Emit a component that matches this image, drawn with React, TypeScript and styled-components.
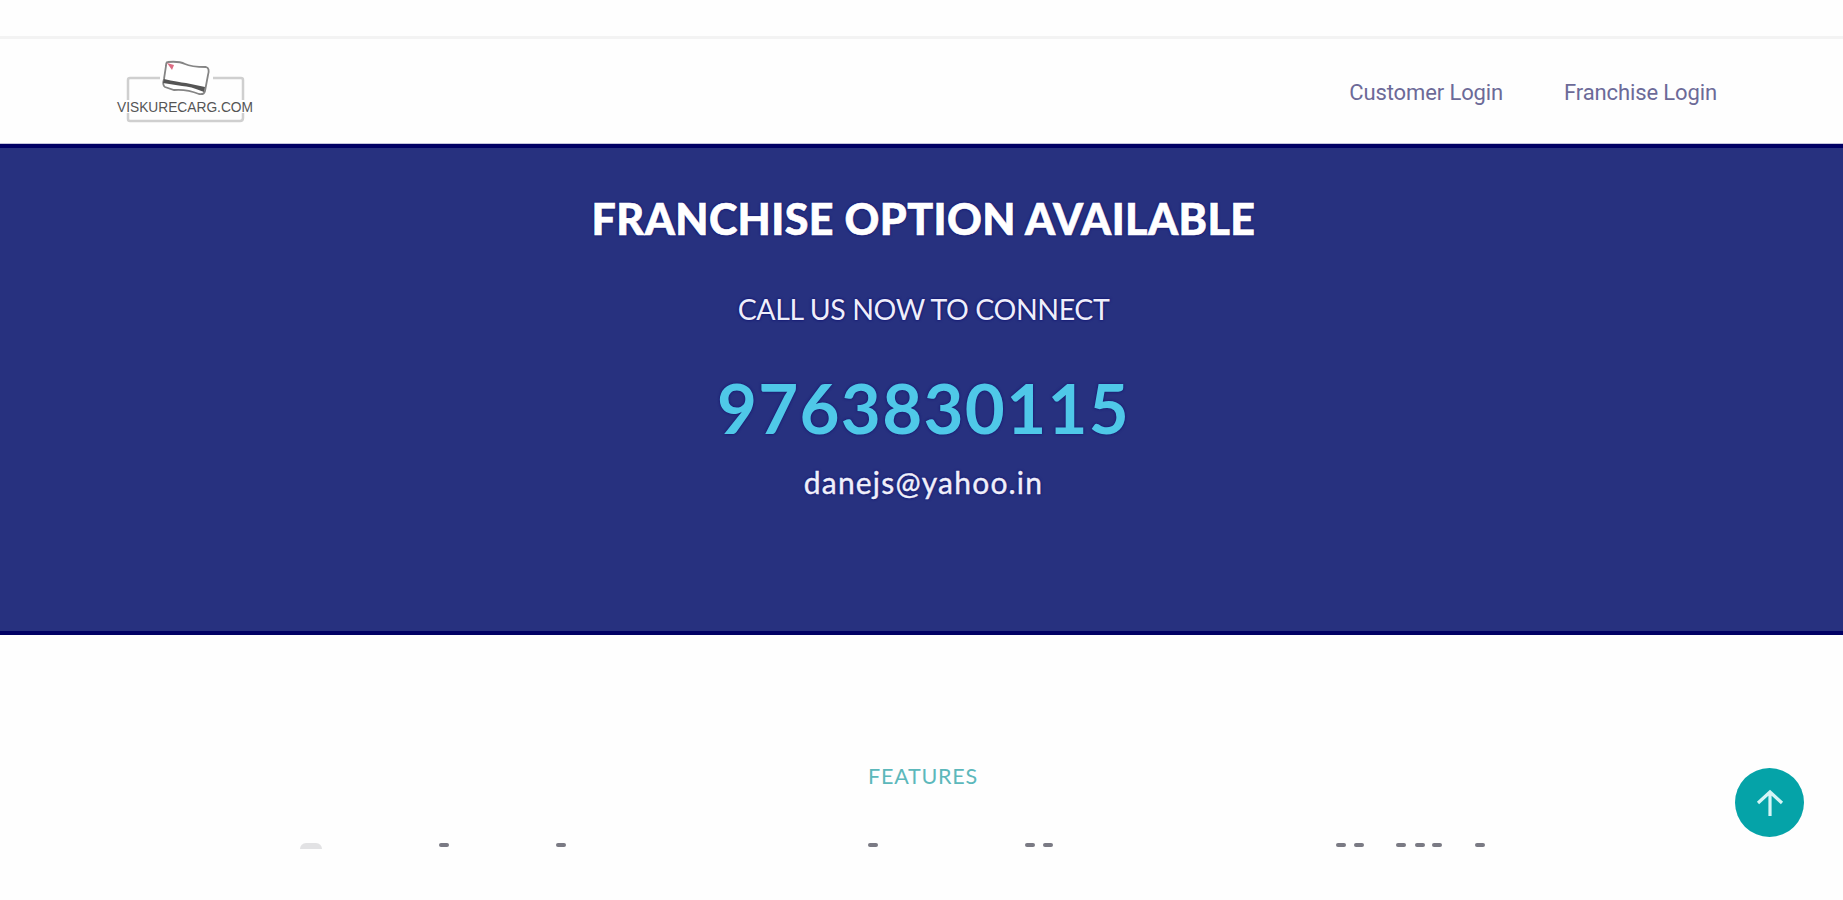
import styled, { createGlobalStyle } from 'styled-components';

const GlobalStyle = createGlobalStyle`
  * {
    box-sizing: border-box;
  }

  body {
    margin: 0;
    background-color: #fefefe;
    font-family: Lato, "Open Sans", sans-serif;
    overflow: hidden;
  }

  h1, h2, p {
    margin: 0;
  }

  a {
    color: inherit;
    text-decoration: none;
  }
`;

const Page = styled.div`
  display: flex;
  flex-direction: column;
  height: 900px;
`;

const TopStrip = styled.div`
  height: 39px;
  border-bottom: 3px solid #f3f3f3;
`;

const Header = styled.header`
  display: flex;
  justify-content: space-between;
  height: 105px;
  padding: 0 126px 0 113px;
  border-bottom: 1px solid #c4c4dc;
`;

const Logo = styled.svg`
  width: 146px;
  height: 68px;
  margin-top: 20px;
  overflow: visible;
`;

const Nav = styled.nav`
  display: flex;
  gap: 61px;
  padding-top: 40px;
`;

const NavLink = styled.a`
  font-family: Roboto, sans-serif;
  font-size: 22px;
  line-height: 28px;
  letter-spacing: -0.12px;
  color: #6c6a98;
`;

const Banner = styled.section`
  display: flex;
  flex-direction: column;
  align-items: center;
  height: 491px;
  padding: 47px 0 0 4px;
  background-color: #27317f;
  border-top: 4px solid #000064;
  border-bottom: 4px solid #000064;
  color: #fff;
  white-space: nowrap;
`;

const Title = styled.h1`
  font-size: 43px;
  font-weight: 900;
  line-height: 48px;
  letter-spacing: 0.4px;
  -webkit-text-stroke: 0.6px #fff;
  text-shadow: 0 0 3px #00006a;
`;

const Caption = styled.p`
  margin-top: 48px;
  font-size: 28.5px;
  line-height: 36px;
  letter-spacing: -0.4px;
  color: #eeeefa;
  text-shadow: 0 0 3px #00006a;
`;

const Phone = styled.p`
  margin-top: 41px;
  font-size: 69px;
  font-weight: 700;
  line-height: 80px;
  letter-spacing: 1.3px;
  color: #4fc8e8;
  text-shadow: 0 0 3px #10106a;
`;

const Email = styled.p`
  margin-top: 16px;
  font-size: 30px;
  line-height: 36px;
  letter-spacing: 1.2px;
  color: #f0f0fa;
  -webkit-text-stroke: 0.4px #f0f0fa;
  text-shadow: 0 0 3px #00006a;
`;

const Features = styled.section`
  display: flex;
  flex-direction: column;
  flex: 1;
  padding-top: 126px;
`;

const FeaturesLabel = styled.h2`
  padding-left: 3px;
  font-size: 21.5px;
  font-weight: 400;
  line-height: 30px;
  letter-spacing: 0.8px;
  text-align: center;
  color: #5cb8bb;
`;

const HeadingEdge = styled.div`
  display: flex;
  height: 7px;
  margin-top: 51px;
  overflow: hidden;
`;

const Tip = styled.span<{ $gap: number; $soft?: boolean }>`
  flex: none;
  width: ${props => (props.$soft ? 22 : 10)}px;
  height: ${props => (props.$soft ? 6 : 4)}px;
  margin-left: ${props => props.$gap}px;
  margin-top: 1px;
  border-radius: ${props => (props.$soft ? '11px 11px 0 0' : '2px')};
  background-color: ${props => (props.$soft ? '#e2e2e4' : '#7a7a84')};
`;

const ScrollTop = styled.button`
  position: fixed;
  top: 768px;
  left: 1735px;
  display: flex;
  align-items: center;
  justify-content: center;
  width: 69px;
  height: 69px;
  padding: 0;
  border: 0;
  border-radius: 50%;
  background-color: #05a3a8;
`;

// distance from the previous tip to the next one
const tips = [117, 107, 302, 147, 8, 283, 8, 32, 9, 7, 33];

const App = () => {
  return (
    <>
      <GlobalStyle />
      <Page>
        <TopStrip />
        <Header>
          <Logo viewBox="-4 0 146 68" fill="none">
            <path d="M43 19H13Q11 19 11 21V41M11 54V60Q11 62 13 62H123Q126 62 126 59V54M126 41V21Q126 19 124 19H96" stroke="#cfcfcf" strokeWidth="2.5" />
            <path d="M51 3Q62 2 68 5T89 8Q93 9 91 16L88 32Q87 36 82 35Q70 30 57 31L48 28Q45 26 47 20L49 7Q49 3 51 3Z" fill="#fff" stroke="#858585" strokeWidth="1.8" />
            <path d="M47 20Q61 23 69 24L88 28L87 33Q73 27 65 27L46 24Z" fill="#555" />
            <path d="M50 4L57 6L55 11Z" fill="#dc6c83" />
            <text x="0" y="53" textLength="136" lengthAdjust="spacingAndGlyphs" fontFamily="Liberation Sans, sans-serif" fontSize="14" fill="#555">VISKURECARG.COM</text>
          </Logo>
          <Nav>
            <NavLink href="#">Customer Login</NavLink>
            <NavLink href="#">Franchise Login</NavLink>
          </Nav>
        </Header>
        <Banner>
          <Title>FRANCHISE OPTION AVAILABLE</Title>
          <Caption>CALL US NOW TO CONNECT</Caption>
          <Phone>9763830115</Phone>
          <Email>danejs@yahoo.in</Email>
        </Banner>
        <Features>
          <FeaturesLabel>FEATURES</FeaturesLabel>
          <HeadingEdge>
            <Tip $gap={300} $soft />
            {tips.map((gap, index) => (
              <Tip key={index} $gap={gap} />
            ))}
          </HeadingEdge>
        </Features>
      </Page>
      <ScrollTop aria-label="Back to top">
        <svg width="28" height="28" viewBox="0 0 28 28" fill="none" stroke="#d5f5f6" strokeWidth="3.2">
          <path d="M14 27V3M2 14L14 3L26 14" />
        </svg>
      </ScrollTop>
    </>
  );
};

export default App;
